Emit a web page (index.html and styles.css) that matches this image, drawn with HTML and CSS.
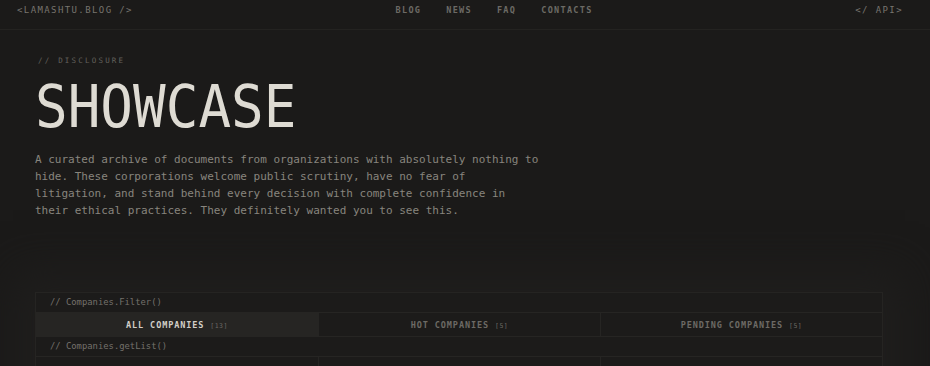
FILE: index.html
```html
<!DOCTYPE html>
<html lang="en">
<head>
    <meta charset="UTF-8">
    <meta name="viewport" content="width=device-width, initial-scale=1.0">
    <title>Showcase - lamashtu.blog</title>
    <link rel="stylesheet" href="styles.css">
</head>
<body>
    <header class="topbar">
        <a href="/" class="logo">&lt;LAMASHTU.BLOG /&gt;</a>
        <nav class="menu">
            <a href="/blog">BLOG</a>
            <a href="/news">NEWS</a>
            <a href="/faq">FAQ</a>
            <a href="/contacts">CONTACTS</a>
        </nav>
        <a href="/api" class="api-link">&lt;/ API&gt;</a>
    </header>

    <main class="hero">
        <p class="eyebrow">// DISCLOSURE</p>
        <h1 class="title"><span class="title-text">SHOWCASE</span></h1>
        <p class="lead">
            A curated archive of documents from organizations with absolutely nothing to
            hide. These corporations welcome public scrutiny, have no fear of
            litigation, and stand behind every decision with complete confidence in
            their ethical practices. They definitely wanted you to see this.
        </p>
    </main>

    <section class="panel">
        <div class="panel-label">// Companies.Filter()</div>
        <div class="tabs">
            <button class="tab active">ALL COMPANIES <span class="count">[13]</span></button>
            <button class="tab">HOT COMPANIES <span class="count">[5]</span></button>
            <button class="tab">PENDING COMPANIES <span class="count">[5]</span></button>
        </div>
        <div class="panel-label">// Companies.getList()</div>
        <div class="company-grid">
            <div class="company-cell"></div>
            <div class="company-cell"></div>
            <div class="company-cell"></div>
        </div>
    </section>
</body>
</html>
```

FILE: styles.css
```css
body {
    margin: 0;
    background-color: #1b1a19;
    color: #8a8780;
    font-family: 'DejaVu Sans Mono', 'Liberation Mono', monospace;
    overflow: hidden;
}
a {
    text-decoration: none;
}
.topbar {
    display: flex;
    justify-content: space-between;
    align-items: center;
    height: 29px;
    padding: 0 27px 0 17px;
    border-bottom: 1px solid #242321;
}
.logo,
.api-link {
    color: #77746e;
    font-size: 9px;
    letter-spacing: 1.4px;
    margin-top: -10px;
}
.menu {
    display: flex;
    gap: 25px;
    margin-top: -10px;
}
.menu a {
    color: #6c6a65;
    font-size: 8.5px;
    font-weight: bold;
    letter-spacing: 1.3px;
}
.hero {
    padding: 0 35px;
}
.eyebrow {
    margin: 26px 0 0 3px;
    font-size: 7.5px;
    letter-spacing: 2.2px;
    color: #63615c;
}
.title {
    margin: 7px 0 0 0;
    font-size: 59px;
    font-weight: normal;
    color: #dedbd3;
    line-height: 70px;
}
.title-text {
    display: inline-block;
    transform: scaleX(0.92);
    transform-origin: left center;
}
.lead {
    margin: 9px 0 0 0;
    width: 506px;
    font-size: 11px;
    line-height: 17px;
    color: #88857e;
}
.panel {
    margin: 73px 47px 0 35px;
    background-color: #1c1b1a;
    border: 1px solid #252422;
    box-shadow: 0 0 40px 22px #1f1e1d;
}
.panel-label {
    height: 19px;
    line-height: 19px;
    padding-left: 14px;
    font-size: 8.85px;
    color: #74716b;
    border-bottom: 1px solid #262523;
}
.tabs {
    display: grid;
    grid-template-columns: 1fr 1fr 1fr;
    border-bottom: 1px solid #262523;
}
.tab {
    height: 23px;
    background: transparent;
    border: none;
    border-left: 1px solid #262523;
    font-family: inherit;
    font-size: 8.5px;
    font-weight: bold;
    letter-spacing: 0.9px;
    color: #6c6a65;
    cursor: pointer;
}
.tab:first-child {
    border-left: none;
}
.tab.active {
    background-color: #262523;
    color: #d2cfc8;
}
.count {
    font-size: 6.5px;
    font-weight: normal;
    letter-spacing: 0.5px;
    color: #6c6a65;
}
.company-grid {
    display: grid;
    grid-template-columns: 1fr 1fr 1fr;
}
.company-cell {
    height: 80px;
    border-left: 1px solid #262523;
}
.company-cell:first-child {
    border-left: none;
}
```
